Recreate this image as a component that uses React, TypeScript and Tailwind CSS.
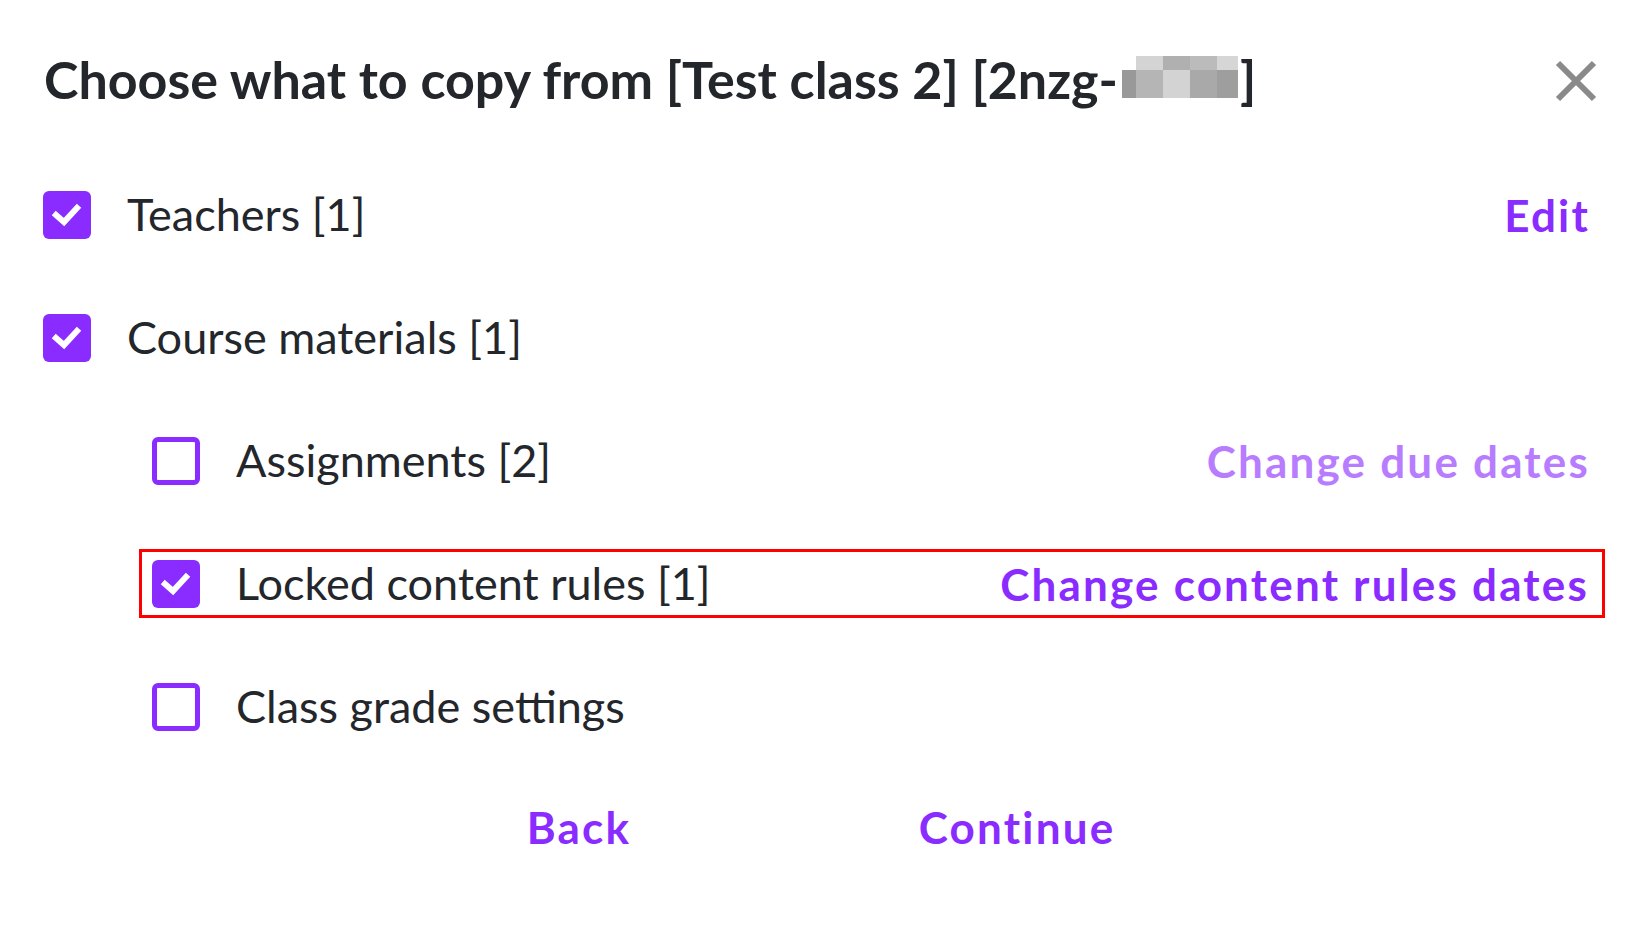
import React from "react";

const PURPLE = "#8a2bff";

function Check({ checked }: { checked: boolean }) {
  if (checked) {
    return (
      <div className="w-[48px] h-[48px] rounded-[6px] bg-[#8a2bff] flex items-center justify-center shrink-0">
        <svg width="48" height="48" viewBox="0 0 48 48">
          <path d="M13 24 L21 31 L34 17" fill="none" stroke="#fff" strokeWidth="6" strokeLinecap="square" />
        </svg>
      </div>
    );
  }
  return <div className="w-[48px] h-[48px] rounded-[6px] border-[5px] border-[#8a2bff] bg-white shrink-0" />;
}

// pixelated part of the class code
const PIX_TOP = ["#d4d4d4", "#b0b0b0", "#bbbbbb", "#d6d6d6"];
const PIX_BOT = ["#b5b5b5", "#d3d3d3", "#a9a9a9", "#9e9e9e"];

function Pixels() {
  return (
    <span className="inline-flex flex-col align-[29px] ml-[4px] mr-[2px]">
      <span className="flex pl-[14px]">
        {PIX_TOP.map((c, i) => (
          <span key={i} className={i === 3 ? "w-[21px] h-[14px]" : "w-[27px] h-[14px]"} style={{ background: c }} />
        ))}
      </span>
      <span className="flex">
        <span className="w-[14px] h-[28px] bg-[#999999]" />
        {PIX_BOT.map((c, i) => (
          <span key={i} className={i === 3 ? "w-[21px] h-[28px]" : "w-[27px] h-[28px]"} style={{ background: c }} />
        ))}
      </span>
    </span>
  );
}

function Row({ checked, label, link, linkLight, indent }: {
  checked: boolean
  label: string
  link?: string
  linkLight?: boolean
  indent?: boolean
}) {
  return (
    <div className={`h-[123px] flex items-center pr-[44px] ${indent ? "pl-[152px]" : "pl-[43px]"}`}>
      <Check checked={checked} />
      <span className="ml-[36px] text-[45px] text-[#23262b] leading-none">{label}</span>
      {link && (
        <span className={`ml-auto text-[44px] font-bold tracking-[0.05em] leading-none ${linkLight ? "text-[#b87dff]" : "text-[#8a2bff]"}`}>
          {link}
        </span>
      )}
    </div>
  );
}

export default function App() {
  return (
    <div className="w-[1634px] h-[929px] bg-white font-['Lato',sans-serif]">
      {/* Header */}
      <div className="h-[153px] pt-[9px] flex items-center justify-between pl-[44px] pr-[34px]">
        <h1 className="mt-[-4px] text-[52px] font-bold text-[#23262b] leading-none whitespace-nowrap">
          Choose what to copy from [Test class 2] [2nzg-<Pixels />]
        </h1>
        <svg width="48" height="48" viewBox="0 0 48 48" className="shrink-0">
          <path d="M6 6 L42 42 M42 6 L6 42" stroke="#8a8a8a" strokeWidth="6" />
        </svg>
      </div>

      <Row checked label="Teachers [1]" link="Edit" />
      <Row checked label="Course materials [1]" />
      <Row checked={false} indent label="Assignments [2]" link="Change due dates" linkLight />

      {/* highlighted row */}
      <div className="h-[123px] flex items-center pl-[139px] pr-[29px]">
        <div className="flex-1 h-[69px] border-[3px] border-[#ff0000] flex items-center pl-[10px] pr-[13px]">
          <Check checked />
          <span className="ml-[36px] text-[45px] text-[#23262b] leading-none">Locked content rules [1]</span>
          <span className="ml-auto text-[44px] font-bold tracking-[0.05em] leading-none" style={{ color: PURPLE }}>
            Change content rules dates
          </span>
        </div>
      </div>

      <Row checked={false} indent label="Class grade settings" />

      {/* Footer buttons */}
      <div className="h-[118px] flex items-center">
        <button className="w-[0px] ml-[579px] flex justify-center text-[44px] font-bold text-[#8a2bff] tracking-[0.05em] leading-none">
          <span className="whitespace-nowrap">Back</span>
        </button>
        <button className="w-[0px] ml-[438px] flex justify-center text-[44px] font-bold text-[#8a2bff] tracking-[0.05em] leading-none">
          <span className="whitespace-nowrap">Continue</span>
        </button>
      </div>
    </div>
  );
}
